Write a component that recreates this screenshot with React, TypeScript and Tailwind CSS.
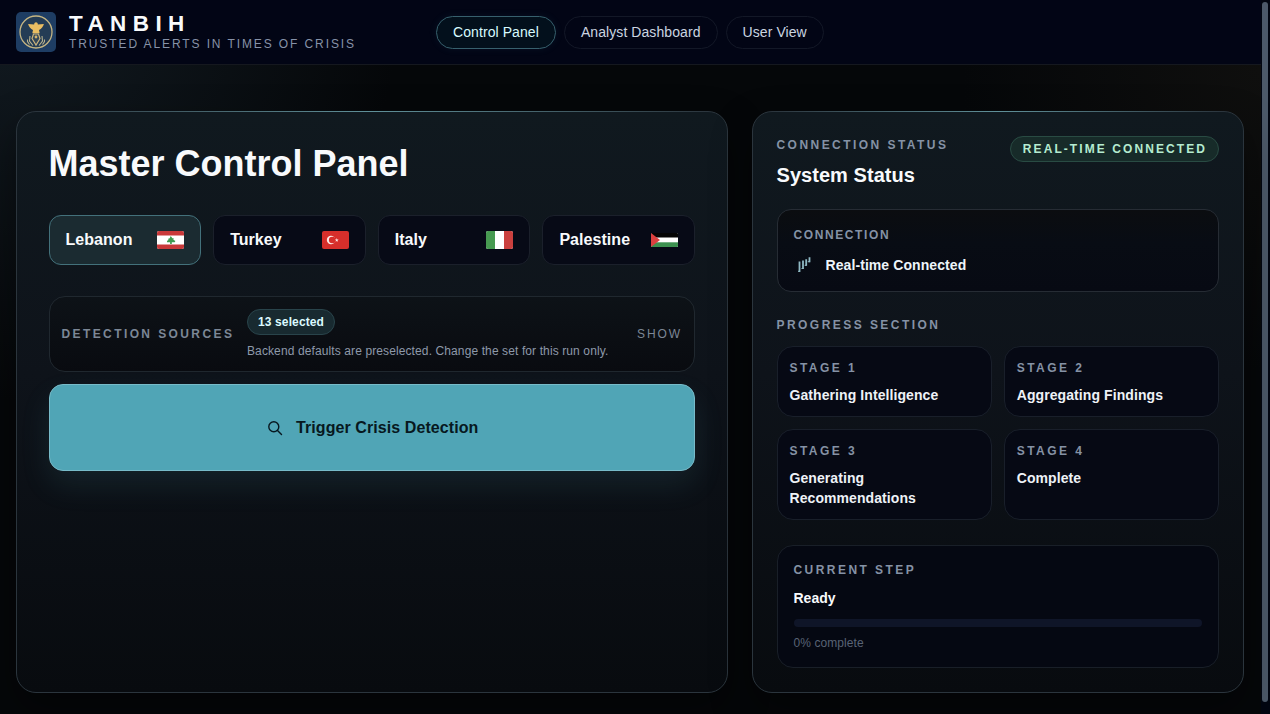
import type { ReactNode } from 'react';

const navItems = ['Control Panel', 'Analyst Dashboard', 'User View'];

const stages = ['Gathering Intelligence', 'Aggregating Findings', 'Generating Recommendations', 'Complete'];

const Logo = () => (
    <svg viewBox="0 0 40 40" className="size-10 shrink-0">
        <rect width="40" height="40" rx="5" fill="#1e3d63" />
        <circle cx="20" cy="20" r="16" fill="#243c55" stroke="#c5b583" strokeWidth="1.3" />
        {/* Winged figure */}
        <path d="M18.500 11q1.500-1.500 3 0l.4 1.600 6-.6c-.6 2.500-2.500 4.800-4.900 6l.7 3.200h-7.400l.7-3.200c-2.400-1.200-4.300-3.500-4.900-6l6 .6z" fill="#e9bd62" />
        <path d="M17.500 22h5l1.500 4.500L20 33l-4-6.500z" fill="#34485a" stroke="#cbb37c" strokeWidth="1.200" />
        <circle cx="20" cy="25" r="1.400" fill="#d3b36b" />
        <path d="M14 24l-.5 5 3.500 4.500M26 24l.5 5-3.500 4.500M11.500 27.500v2l2 3M28.500 27.500v2l-2 3" fill="none" stroke="#b9b28e" strokeWidth="1.100" />
    </svg>
);

const LebanonFlag = () => (
    <svg viewBox="0 0 27 18" className="h-[18px] w-[27px] rounded-[2px]">
        <rect width="27" height="18" fill="#fff" />
        <rect width="27" height="4.500" fill="#c9393a" />
        <rect y="13.500" width="27" height="4.500" fill="#c9393a" />
        <path d="M13.700 5l1.700 2.200h1.300l-.3 1.500 2 1.200-.7 1.400h-2.900V13h-1.700v-1.700h-3l-.2-1.300 1.500-.9-.2-1.400 1.500-.4z" fill="#3f9a50" />
    </svg>
);

const TurkeyFlag = () => (
    <svg viewBox="0 0 27 18" className="h-[18px] w-[27px] rounded-[2px]">
        <rect width="27" height="18" fill="#d62f2b" />
        <circle cx="9" cy="9" r="4.200" fill="#fbe9e7" />
        <circle cx="10.200" cy="9" r="3.300" fill="#d62f2b" />
        <path d="M14.800 7l.5 1.400h1.500l-1.200.9.400 1.400-1.200-.8-1.200.8.400-1.400-1.200-.9h1.500z" fill="#fbe9e7" />
    </svg>
);

const ItalyFlag = () => (
    <svg viewBox="0 0 27 18" className="h-[18px] w-[27px] rounded-[2px]">
        <rect width="27" height="18" fill="#fff" />
        <rect width="9" height="18" fill="#479a51" />
        <rect x="18" width="9" height="18" fill="#cb403e" />
    </svg>
);

const PalestineFlag = () => (
    <svg viewBox="0 0 27 14" className="h-[14px] w-[27px] rounded-[1px]">
        <rect width="27" height="14" fill="#fff" />
        <rect width="27" height="4.500" fill="#050505" />
        <rect y="9.300" width="27" height="4.700" fill="#3d9150" />
        <path d="M0 0l9 7-9 7z" fill="#dc4140" />
    </svg>
);

const countries = [
    { name: 'Lebanon', flag: <LebanonFlag /> },
    { name: 'Turkey', flag: <TurkeyFlag /> },
    { name: 'Italy', flag: <ItalyFlag /> },
    { name: 'Palestine', flag: <PalestineFlag /> },
];

const Label = ({ tight, children }: { tight?: boolean; children: ReactNode }) => (
    <p className={`text-[12px] leading-[17px] font-bold text-[#8592a5] uppercase ${tight ? 'tracking-[1.600px]' : 'tracking-[2.450px]'}`}>
        {children}
    </p>
);

const Panel = ({ className, children }: { className: string; children: ReactNode }) => (
    <section className={`relative rounded-[20px] border border-[#2b353d] bg-linear-to-b from-[#10191f] via-[#0e131a] via-45% to-[#080b0f] shadow-[0_18px_40px_rgba(0,0,0,0.4)] ${className}`}>
        {/* Highlight along the top edge */}
        <div className="absolute -top-px right-5 left-5 h-px bg-linear-to-r from-transparent via-[#5f9099] to-transparent" />
        {children}
    </section>
);

const Header = () => (
    <header className="flex h-[65px] items-center border-b border-[#15181f] bg-[#020515] pl-4">
        <div className="flex w-[420px] items-center gap-[13px]">
            <Logo />
            <div>
                <h1 className="text-[22.500px] leading-[22px] font-bold tracking-[6.400px] text-[#f8fafc]">TANBIH</h1>
                <p className="mt-px text-[12px] leading-4 tracking-[1.900px] text-[#8792a8] uppercase">Trusted alerts in times of crisis</p>
            </div>
        </div>
        <nav className="flex gap-2">
            {navItems.map((item, i) => (
                <a
                    key={item}
                    className={`flex h-[33px] items-center rounded-full border px-4 text-[14px] tracking-[0.080px] ${i === 0 ? 'border-[#37606d] bg-[#03101c] text-[#d8fbff] shadow-[0_0_8px_rgba(80,165,183,0.08)]' : 'border-[#131827] text-[#cbd5e1]'}`}
                >
                    {item}
                </a>
            ))}
        </nav>
    </header>
);

const ControlPanel = () => (
    <Panel className="w-[712px] pt-[31px] pr-8 pl-[31.500px]">
        <h2 className="text-[36px] leading-[42px] font-bold text-[#f8fafc]">Master Control Panel</h2>

        <div className="mt-[30px] grid grid-cols-4 gap-3">
            {countries.map((country, i) => (
                <button
                    key={country.name}
                    className={`flex h-[50px] items-center justify-between rounded-xl border px-4 text-[16px] font-bold tracking-[0.050px] text-[#f8fafc] ${i === 0 ? 'border-[#43717b] bg-[#1b2b31]' : 'border-[#1b202b] bg-[#070a16]'}`}
                >
                    {country.name}
                    {country.flag}
                </button>
            ))}
        </div>

        <div className="mt-[31px] flex h-[76px] items-center rounded-2xl border border-[#20282f] bg-linear-to-b from-[#0d1217] to-[#090b10] px-3">
            <p className="w-[185.500px] text-[12px] font-bold tracking-[2.400px] text-[#7c8796] uppercase">Detection Sources</p>
            <div className="flex-1 pt-px">
                <span className="flex h-[26px] w-fit items-center rounded-full border border-[#29444b] bg-[#182a30] px-[10px] text-[12px] font-bold tracking-[0.120px] text-[#dcfaff]">
                    13 selected
                </span>
                <p className="mt-[7px] text-[12px] leading-[18px] tracking-[0.110px] text-[#8e99aa]">
                    Backend defaults are preselected. Change the set for this run only.
                </p>
            </div>
            <span className="text-[12px] tracking-[1.900px] text-[#7c8796]">SHOW</span>
        </div>

        <button className="mt-3 flex h-[87px] w-full items-center justify-center gap-[13px] rounded-[14px] border border-[#78bbc9] bg-[#50a5b6] pl-[2px] text-[16px] font-bold tracking-[0.080px] text-[#071820] shadow-[0_14px_30px_rgba(80,165,182,0.12)]">
            <svg viewBox="0 0 16 16" className="size-4" fill="none" stroke="currentColor" strokeWidth="1.400" strokeLinecap="round">
                <circle cx="6.800" cy="6.800" r="5" />
                <path d="M10.500 10.500l4 4" />
            </svg>
            Trigger Crisis Detection
        </button>
    </Panel>
);

const StatusPanel = () => (
    <Panel className="w-[492px] pt-[25px] pr-6 pl-[23.500px]">
        <div className="flex items-start justify-between">
            <div>
                <Label>Connection Status</Label>
                <h3 className="mt-[7px] text-[20px] leading-7 font-bold tracking-[0.050px] text-[#f8fafc]">System Status</h3>
            </div>
            <span className="-mt-px flex h-[26px] items-center rounded-full border border-[#294b43] bg-[#172b29] pr-[11px] pl-3 text-[12px] font-bold tracking-[2.080px] text-[#b5ecd0]">
                REAL-TIME CONNECTED
            </span>
        </div>

        <div className="mt-5 h-[83px] rounded-[14px] border border-[#262c34] bg-linear-to-b from-[#0b0d10] via-[#080c14] via-40% to-[#070a13] px-4 pt-[17px]">
            <Label tight>Connection</Label>
            <div className="mt-[11px] flex items-center gap-3">
                <svg viewBox="0 0 20 20" className="size-5" fill="none" stroke="#8fb9c4" strokeWidth="1.800">
                    <path d="M5.500 6.500v10.500M9 5.500v8.500M12.200 4.300v6.500M15.500 2.300v5" />
                    <path d="M4 16.300h2M7.500 13.500h2M10.700 10.300h2M13.800 6.700h2" strokeWidth="1" />
                </svg>
                <span className="text-[14px] leading-5 font-bold tracking-[0.080px] text-[#eef5fa]">Real-time Connected</span>
            </div>
        </div>

        <div className="mt-[25px]">
            <Label>Progress Section</Label>
        </div>
        <div className="mt-3 grid grid-cols-2 gap-3">
            {stages.map((stage, i) => (
                <div key={stage} className="rounded-[16px] border border-[#191f2a] bg-[#060914] px-3 pt-[13px] pb-[11px]">
                    <Label>Stage {i + 1}</Label>
                    <p className="mt-2 text-[14px] leading-5 font-bold tracking-[0.080px] text-[#eef2f7]">{stage}</p>
                </div>
            ))}
        </div>

        <div className="mt-[24.500px] h-[123px] rounded-[16px] border border-[#191f28] bg-[#050812] px-4 pt-[16.500px]">
            <Label>Current Step</Label>
            <p className="mt-[9px] text-[14px] leading-5 font-bold text-[#f8fafc]">Ready</p>
            <div className="mt-[11px] h-2 rounded-full bg-[#0f1528]" />
            <p className="mt-2 text-[12px] leading-4 tracking-[0.080px] text-[#596375]">0% complete</p>
        </div>
    </Panel>
);

export default function App() {
    return (
        <div className="flex h-[714px] overflow-hidden bg-[#050709] font-['Liberation_Sans',Arial,sans-serif]">
            <div className="w-[1261px] bg-[radial-gradient(circle_at_0%_0%,#121b22_0,transparent_400px),radial-gradient(circle_at_100%_10%,#0f0f0e_0,transparent_300px)]">
                <Header />
                <main className="flex h-[627.500px] gap-6 px-4 pt-[46px]">
                    <ControlPanel />
                    <StatusPanel />
                </main>
            </div>
            {/* Page scrollbar */}
            <div className="flex-1 bg-[#020611] px-px pt-0.5">
                <div className="h-[700px] w-[6px] rounded-full bg-[#4c5969]" />
            </div>
        </div>
    );
}
